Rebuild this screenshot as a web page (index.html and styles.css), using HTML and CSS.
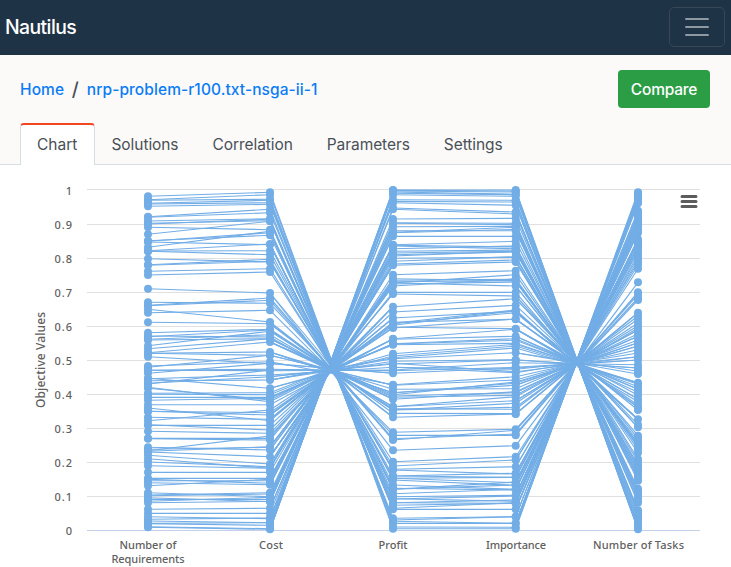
FILE: index.html
```html
<!DOCTYPE html>
<html lang="en">
<head>
<meta charset="utf-8">
<title>Nautilus</title>
<link rel="stylesheet" href="styles.css">
</head>
<body>
<nav class="navbar">
  <a class="brand">Nautilus</a>
  <button class="toggler" aria-label="Menu"><svg width="30" height="30" viewBox="0 0 30 30"><path d="M4 7h22M4 15h22M4 23h22" stroke="currentColor" stroke-width="2" stroke-linecap="round"/></svg></button>
</nav>
<header class="page-head">
  <div class="title-row">
    <div class="crumbs"><a class="home">Home</a><span class="slash">/</span><a class="file">nrp-problem-r100.txt-nsga-ii-1</a></div>
    <button class="compare">Compare</button>
  </div>
  <div class="tabs">
    <a class="tab active">Chart</a><a class="tab">Solutions</a><a class="tab">Correlation</a><a class="tab">Parameters</a><a class="tab">Settings</a>
  </div>
</header>
<main>
  <svg id="chart" class="chart" width="731" height="402" viewBox="0 165 731 402"></svg>
</main>
<script src="chart.js"></script>
</body>
</html>
```
FILE: styles.css
```css
* { box-sizing: border-box; }
body { margin: 0; width: 731px; height: 567px; overflow: hidden; background: #fff; font-family: Inter, "Liberation Sans", sans-serif; font-size: 15.5px; color: #495057; }
.navbar { display: flex; justify-content: space-between; align-items: center; height: 55px; padding: 0 6px 1px 5px; background: #1f3347; }
.brand { color: #fff; font-size: 19.4px; font-weight: 500; letter-spacing: -0.58px; }
.toggler { display: flex; align-items: center; justify-content: center; width: 56px; height: 40px; padding: 0; border: 1px solid #364858; border-radius: 5px; background: none; color: #8f99a3; }
.page-head { display: flex; flex-direction: column; justify-content: space-between; height: 110px; padding: 15px 20px 0; background: #fcfaf9; border-bottom: 1px solid #d5dde5; }
.title-row { display: flex; justify-content: space-between; align-items: center; padding-right: 1px; }
.crumbs { display: flex; align-items: center; font-weight: 500; color: #0a7cf5; letter-spacing: 0.09px; }
.slash { margin: 0 8px 0 7.5px; color: #495057; font-size: 19px; font-weight: 500; }
.compare { width: 92px; height: 38px; padding: 0; border: 0; border-radius: 4px; background: #2b9e45; color: #fff; font: 500 15.5px Inter, sans-serif; letter-spacing: -0.22px; }
.tabs { display: flex; align-items: flex-end; margin-bottom: -1px; }
.tab { height: 41px; padding: 0 17px; line-height: 41px; letter-spacing: -0.07px; }
.tab.active { width: 75px; height: 42px; padding: 0 16px; line-height: 40px; letter-spacing: 0; border: 1px solid #d5dde5; border-top: 2px solid #f1461f; border-bottom: 0; border-radius: 4px 4px 0 0; background: #fff; }
.tab.active + .tab { padding-left: 16.5px; }
.chart { display: block; }
.grid { stroke: #e0e0e0; }
.axis { stroke: #c4d0ea; }
.line { stroke: #72ade6; stroke-width: 1.15; fill: none; }
.dot { fill: #72ade6; }
.label { fill: #606060; font: 500 11px "Noto Sans", sans-serif; }
.axis-title { fill: #606060; font: 500 12px "Noto Sans", sans-serif; }
.burger { stroke: #5c5c5c; stroke-width: 3; stroke-linecap: round; }
```
FILE: chart.js
```js
const xs = [148, 270, 393, 515.7, 638];
const parse = (s, base) => s.trim().split(/\s+/).map(p => p.split(",").map(v => base + v / 3));

// Requirements -> Cost
const first = parse(`43,31 53,38 55,52 64,55 66,62 73,67 104,82 106,92 117,110 124,116 126,112 136,143 157,118
176,160 178,152 180,188 196,148 206,186 207,206 208,218 230,240 248,232 250,238 268,260 279,270 320,333
361,364 370,348 371,355 382,420 392,385 421,425 452,442 462,465 464,444 472,458 474,470 491,448 500,470
512,480 514,510 514,520 524,545`, 182).concat(parse(`18,5 22,-14 31,32 31,28 40,10 55,85 56,45 62,60 70,50 72,30 82,125 85,120
100,98 103,104 112,112 121,115 134,134 144,182 154,165 154,158 172,178 182,150 194,210 196,196 214,220 235,235 236,240 262,270
268,262 272,228 274,260 276,290 286,312 296,325 306,320 317,325 337,337 355,355 358,370 362,362 368,374 377,358
398,410 405,398 407,402 413,425 418,418 424,412 428,424 448,445 460,460 470,476 478,474 483,488 490,488 491,496 500,506 502,508`, 360));

// Profit -> Importance
const third = parse(`24,24 25,27 27,30 30,37 34,38 38,43 53,55 58,60 62,70 78,90 82,96 111,109 122,124 124,128 134,133
151,136 146,146 152,142 163,163 188,178 190,195 192,200 200,192 208,204 213,208 218,210 222,208 229,226 238,224
246,234 250,240 278,266 290,296 295,292 299,296 303,278 306,300 312,291 302,312 331,331 336,342 374,350 390,370
408,388 424,384 425,392 430,386 438,411 421,412 436,440 470,442 472,463 485,470 486,475 488,484 515,487 522,492
527,498 530,512 538,533`, 182).concat(parse(`12,0 10,35 22,28 22,38 30,8 32,22 40,24 74,50 76,60 88,86 98,70 98,76
104,66 108,98 112,106 118,95 140,110 140,122 146,148 150,130 150,142 160,161 172,162 217,208 226,226 240,211 236,222
271,257 305,290 318,300 328,320 330,342 348,340 348,352 355,368 360,376 355,352 375,388 385,390 388,375 388,366 401,388
410,406 417,408 416,424 428,420 428,430 436,430 445,428 448,448 475,470 480,470 484,490 490,490 501,502 506,506`, 360));

const tasks = `31 35 40 44 49 54 58 64 86 91 98 103 108 115 120 126 131 138 145 152 172 177 183 190 195 203 208 217 225 233 241 249 260 301
331 338 348 354 392 402 411 423 431 438 444 455 463 474 482 492 503 513 524 534 548 558 568 576
602 607 614 622 631 640 651 659 670 676 684 712 728 736 761 770 778 786 793 802 812 832 839 848 855 862 870 880 888 896
920 926 933 941 949 956 962 985 990 997 1004 1012 1019 1026 1034 1042`.trim().split(/\s+/).map(v => 182 + v / 3);

const up = (a, b) => a - b;
const cost = first.map(p => p[1]).sort(up);
const profit = third.map(p => p[0]).sort(up);
const importance = third.map(p => p[1]).sort(up);

// Connects opposing values through a shared crossing, every value on both sides used.
function inverse(a, b, bulge) {
  const mirror = y => 2 * (360.5 + bulge * (1 - ((y - 360) / 170) ** 2)) - y;
  const nearest = (list, y) => list.reduce((m, v) => Math.abs(v - y) < Math.abs(m - y) ? v : m);
  const pairs = a.map(y => [y, nearest(b, mirror(y))]);
  const used = new Set(pairs.map(p => p[1]));
  b.filter(y => !used.has(y)).forEach(y => pairs.push([nearest(a, mirror(y)), y]));
  return pairs;
}

const segments = [first, inverse(cost, profit, 10), third, inverse(importance, tasks, 3)];
let out = "";
for (let i = 0; i <= 10; i++) {
  const y = i ? 190.5 + i * 34 : 189.5;
  out += `<path class="${i === 10 ? "axis" : "grid"}" d="M87 ${y}H700"/>`;
  const t = i === 0 ? "1" : i === 10 ? "0" : "0." + (10 - i);
  out += `<text class="label" x="72" y="${194.6 + i * 34}" text-anchor="end"${t.length > 1 ? ' textLength="17.5"' : ""}>${t}</text>`;
}
segments.forEach((seg, i) => {
  seg.forEach(([a, b]) => { out += `<path class="line" d="M${xs[i]} ${a.toFixed(1)}L${xs[i + 1]} ${b.toFixed(1)}"/>`; });
});
[first.map(p => p[0]), cost, profit, importance, tasks].forEach((col, i) => {
  col.forEach(y => { out += `<circle class="dot" cx="${xs[i]}" cy="${y.toFixed(1)}" r="4"/>`; });
});
[["Number of", 148, 549, 57], ["Requirements", 148, 563, 73], ["Cost", 271, 549, 24], ["Profit", 393, 549, 29],
 ["Importance", 516, 549, 60], ["Number of Tasks", 638.5, 549, 91]].forEach(([t, x, y, w]) => {
  out += `<text class="label" x="${x - w / 2}" y="${y}" textLength="${w}">${t}</text>`;
});
out += `<text class="axis-title" transform="translate(45 408) rotate(-90)" textLength="96">Objective Values</text>`;
out += `<path class="burger" d="M682 196.5H696M682 201.5H696M682 206.5H696"/>`;
document.getElementById("chart").innerHTML = out;
```
